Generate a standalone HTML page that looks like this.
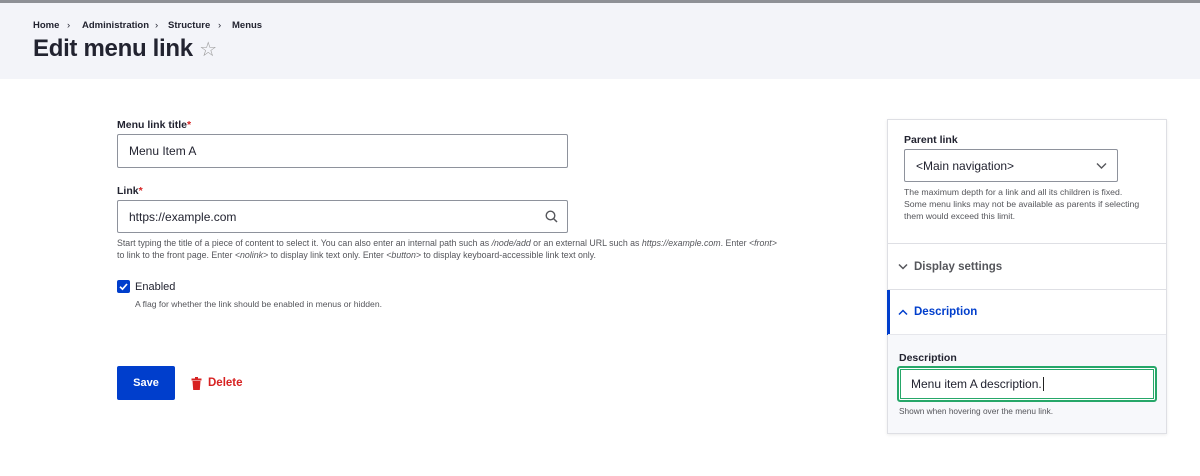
<!DOCTYPE html>
<html><head><meta charset="utf-8"><style>
*{box-sizing:border-box;margin:0;padding:0}
body{width:1200px;height:476px;background:#fff;font-family:"Liberation Sans",sans-serif;color:#222330;position:relative;overflow:hidden}
.abs{position:absolute;white-space:nowrap}
.hdr{position:absolute;left:0;top:0;width:1200px;height:79px;background:#f3f4f9;border-top:3px solid #8e9096}
.bc{font-size:9.5px;font-weight:bold;top:20px;color:#222330}
h1{position:absolute;left:33px;top:35px;font-size:24px;font-weight:bold;letter-spacing:-0.3px}
.lbl{font-size:10.5px;font-weight:bold}
.req{color:#d72222}
.inp{position:absolute;border:1px solid #8e929c;border-radius:2px;background:#fff;font-size:12px;color:#222330;padding-left:11px;display:flex;align-items:center}
.help{font-size:8.3px;color:#55565b;line-height:12px}
.side{position:absolute;left:887px;top:119px;width:280px;height:315px;border:1px solid #dedfe4;box-shadow:0 1px 3px rgba(0,0,0,.08);background:#fff}
</style></head><body>
<div class="hdr"></div>
<div class="abs bc" style="left:33px">Home</div>
<div class="abs bc" style="left:67px;font-weight:normal">›</div>
<div class="abs bc" style="left:82px">Administration</div>
<div class="abs bc" style="left:155px;font-weight:normal">›</div>
<div class="abs bc" style="left:168px">Structure</div>
<div class="abs bc" style="left:218px;font-weight:normal">›</div>
<div class="abs bc" style="left:232px">Menus</div>
<h1>Edit menu link <span style="font-weight:normal;color:#999;font-size:20px">☆</span></h1>

<div class="abs lbl" style="left:117px;top:119px">Menu link title<span class="req">*</span></div>
<div class="inp" style="left:117px;top:134px;width:451px;height:34px">Menu Item A</div>
<div class="abs lbl" style="left:117px;top:185px">Link<span class="req">*</span></div>
<div class="inp" style="left:117px;top:200px;width:451px;height:33px">https://example.com
<svg style="position:absolute;right:9px;top:9px" width="13" height="13" viewBox="0 0 13 13"><circle cx="5.5" cy="5.5" r="4.3" fill="none" stroke="#55565b" stroke-width="1.4"/><path d="M8.6 8.6L12 12" stroke="#55565b" stroke-width="1.5"/></svg></div>
<div class="abs help" style="left:117px;top:237px;font-size:8.8px">Start typing the title of a piece of content to select it. You can also enter an internal path such as <i>/node/add</i> or an external URL such as <i>https://example.com</i>. Enter <i>&lt;front&gt;</i><br>to link to the front page. Enter <i>&lt;nolink&gt;</i> to display link text only. Enter <i>&lt;button&gt;</i> to display keyboard-accessible link text only.</div>
<div class="abs" style="left:117px;top:280px;width:13px;height:13px;background:#003ecc;border-radius:2px"><svg width="13" height="13" viewBox="0 0 13 13"><path d="M3 6.8L5.5 9.2 10 4" fill="none" stroke="#fff" stroke-width="1.7"/></svg></div>
<div class="abs" style="left:135px;top:281px;font-size:11px;color:#222330">Enabled</div>
<div class="abs help" style="left:135px;top:298px;font-size:8.6px">A flag for whether the link should be enabled in menus or hidden.</div>
<div class="abs" style="left:117px;top:366px;width:58px;height:34px;background:#003ecc;border-radius:2px;color:#fff;font-size:11px;font-weight:bold;text-align:center;line-height:34px">Save</div>
<svg class="abs" style="left:191px;top:377px" width="11" height="13" viewBox="0 0 11 13"><rect x="0.5" y="1.5" width="10" height="2" fill="#d72222"/><rect x="4" y="0" width="3" height="2" fill="#d72222"/><path d="M1.5 4h8l-0.7 9h-6.6z" fill="#d72222"/></svg>
<div class="abs" style="left:208px;top:377px;font-size:11.5px;font-weight:bold;color:#d72222">Delete</div>

<div class="side">
 <div class="abs lbl" style="left:16px;top:14px">Parent link</div>
 <div class="inp" style="left:16px;top:29px;width:214px;height:33px;padding-left:11px">&lt;Main navigation&gt;
 <svg style="position:absolute;right:10px;top:12px" width="11" height="8" viewBox="0 0 11 8"><path d="M1 1.5L5.5 6 10 1.5" fill="none" stroke="#55565b" stroke-width="1.4"/></svg></div>
 <div class="abs help" style="left:16px;top:66px;font-size:8.7px">The maximum depth for a link and all its children is fixed.<br>Some menu links may not be available as parents if selecting<br>them would exceed this limit.</div>
 <div class="abs" style="left:0;top:123px;width:278px;border-top:1px solid #dedfe4"></div>
 <svg class="abs" style="left:10px;top:143px" width="10" height="8" viewBox="0 0 10 8"><path d="M1 1.5L5 5.5 9 1.5" fill="none" stroke="#55565b" stroke-width="1.5"/></svg>
 <div class="abs" style="left:26px;top:141px;font-size:11.5px;font-weight:bold;color:#55565b">Display settings</div>
 <div class="abs" style="left:0;top:169px;width:278px;border-top:1px solid #dedfe4"></div>
 <div class="abs" style="left:-1px;top:170px;width:3px;height:45px;background:#003ecc"></div>
 <svg class="abs" style="left:10px;top:188px" width="10" height="8" viewBox="0 0 10 8"><path d="M1 6.5L5 2.5 9 6.5" fill="none" stroke="#003ecc" stroke-width="1.5"/></svg>
 <div class="abs" style="left:26px;top:186px;font-size:11.5px;font-weight:bold;color:#003ecc">Description</div>
 <div class="abs" style="left:0;top:214px;width:278px;height:99px;background:#f7f8fb;border-top:1px solid #e6e7ec"></div>
 <div class="abs lbl" style="left:11px;top:232px">Description</div>
 <div class="inp" style="left:9px;top:246px;width:260px;height:36px;border:2px solid #26a769;border-radius:3px;box-shadow:0 0 0 1px #fff inset,0 0 0 2px #26a769 inset;padding-left:12px">Menu item A description.<span style="border-left:1px solid #222;height:14px;margin-left:1px"></span></div>
 <div class="abs help" style="left:11px;top:285px">Shown when hovering over the menu link.</div>
</div>
</body></html>
